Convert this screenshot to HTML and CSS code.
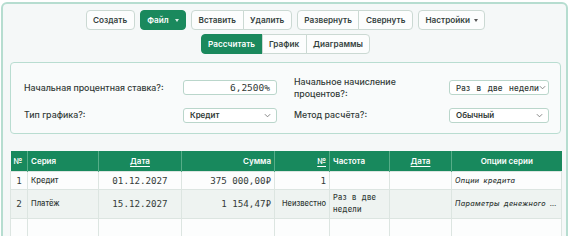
FILE: index.html
```html
<!DOCTYPE html>
<html lang="ru">
<head>
<meta charset="utf-8">
<title>График платежей</title>
<link rel="stylesheet" href="styles.css">
</head>
<body>
<div class="app">
  <div class="toolbar">
    <button class="btn">Создать</button>
    <button class="btn btn-green">Файл <span class="caret caret-light"></span></button>
    <div class="group">
      <button class="btn">Вставить</button>
      <button class="btn">Удалить</button>
    </div>
    <div class="group">
      <button class="btn">Развернуть</button>
      <button class="btn">Свернуть</button>
    </div>
    <button class="btn">Настройки <span class="caret"></span></button>
  </div>
  <div class="toolbar toolbar-second">
    <div class="group">
      <button class="btn btn-green">Рассчитать</button>
      <button class="btn">График</button>
      <button class="btn">Диаграммы</button>
    </div>
  </div>

  <div class="panel">
    <div class="label">Начальная процентная ставка?:</div>
    <div class="control input-num">6,2500%</div>
    <div class="label label-right">Начальное начисление<br>процентов?:</div>
    <div class="control select"><span class="spaced">Раз в две недели</span><svg class="chev" viewBox="0 0 8 5" width="7" height="5"><path d="M1 1l3 3 3-3" fill="none" stroke="#777" stroke-width="1"/></svg></div>

    <div class="label">Тип графика?:</div>
    <div class="control select"><span>Кредит</span><svg class="chev" viewBox="0 0 8 5" width="7" height="5"><path d="M1 1l3 3 3-3" fill="none" stroke="#777" stroke-width="1"/></svg></div>
    <div class="label label-right">Метод расчёта?:</div>
    <div class="control select"><span>Обычный</span><svg class="chev" viewBox="0 0 8 5" width="7" height="5"><path d="M1 1l3 3 3-3" fill="none" stroke="#777" stroke-width="1"/></svg></div>
  </div>

  <table class="grid">
    <colgroup>
      <col class="c1"><col class="c2"><col class="c3"><col class="c4">
      <col class="c5"><col class="c6"><col class="c7"><col class="c8">
    </colgroup>
    <thead>
      <tr>
        <th class="l">№</th>
        <th class="l">Серия</th>
        <th class="c"><u>Дата</u></th>
        <th class="r">Сумма</th>
        <th class="r"><u>№</u></th>
        <th class="l">Частота</th>
        <th class="c"><u>Дата</u></th>
        <th class="c">Опции серии</th>
      </tr>
    </thead>
    <tbody>
      <tr class="row1">
        <td class="c num">1</td>
        <td class="l">Кредит</td>
        <td class="c num">01.12.2027</td>
        <td class="r num">375 000,00₽</td>
        <td class="r num">1</td>
        <td></td>
        <td></td>
        <td class="l opt">Опции кредита</td>
      </tr>
      <tr class="row2">
        <td class="c num">2</td>
        <td class="l">Платёж</td>
        <td class="c num">15.12.2027</td>
        <td class="r num">1 154,47₽</td>
        <td class="r txt">Неизвестно</td>
        <td class="l txt wide">Раз в две недели</td>
        <td></td>
        <td class="l opt"><div class="ellip">Параметры денежного потока</div></td>
      </tr>
      <tr class="row3">
        <td></td><td></td><td></td><td></td><td></td><td></td><td></td><td></td>
      </tr>
    </tbody>
  </table>
</div>
</body>
</html>
```

FILE: styles.css
```css
* { box-sizing: border-box; }

body {
  margin: 0;
  background: #ffffff;
  font-family: Inter, "Noto Sans", "DejaVu Sans", sans-serif;
  color: #2f3a36;
  overflow: hidden;
}

.app {
  margin: 2px 2px 0 1px;
  min-height: 300px;
  border: 2px solid #b6ddd0;
  border-radius: 6px;
  background: #f5f8f8;
  padding: 6px 5px 0 7px;
}

.toolbar {
  display: flex;
  justify-content: center;
  align-items: center;
  gap: 5px;
}

.toolbar-second {
  margin-top: 4px;
}

.group {
  display: flex;
}

.btn {
  height: 20px;
  padding: 0 6.5px;
  font-family: Inter, "Noto Sans", sans-serif;
  font-size: 8.2px;
  font-weight: 600;
  color: #34423d;
  background: #fcfdfd;
  border: 1px solid #cbd9d3;
  border-radius: 4px;
  display: inline-flex;
  align-items: center;
  white-space: nowrap;
}

.group .btn {
  border-radius: 0;
}
.group .btn + .btn {
  margin-left: -1px;
}
.group .btn:first-child {
  border-radius: 4px 0 0 4px;
}
.group .btn:last-child {
  border-radius: 0 4px 4px 0;
}

.btn-green {
  background: #1a895d;
  border-color: #1a895d;
  color: #ffffff;
}

.caret {
  width: 0;
  height: 0;
  border-left: 2.5px solid transparent;
  border-right: 2.5px solid transparent;
  border-top: 3px solid #555;
  margin-left: 4px;
}
.caret-light {
  border-top-color: #dcefe7;
  margin-left: 6px;
}

.panel {
  margin-top: 8px;
  border: 1px solid #b9ddd1;
  border-radius: 4px;
  background: #f9fbfb;
  padding: 13px 12px 10px 13px;
  display: grid;
  grid-template-columns: 159px 94px 172px 100px;
  grid-template-rows: 23px 16px;
  row-gap: 8px;
  align-items: center;
}

.label {
  font-size: 8.8px;
  font-weight: 500;
  line-height: 11.5px;
  color: #323a37;
}
.label-right {
  padding-left: 17px;
}

.control {
  height: 15px;
  border: 1px solid #bad6cb;
  border-radius: 3px;
  background: #ffffff;
  display: flex;
  align-items: center;
  color: #2f3834;
  white-space: nowrap;
}

.input-num {
  justify-content: flex-end;
  padding: 0 6px;
  font-family: "DejaVu Sans Mono", "Liberation Mono", monospace;
  font-size: 9.5px;
}

.select {
  justify-content: space-between;
  padding: 0 5px 0 6px;
  font-weight: 600;
  font-size: 8px;
}
.select .spaced {
  word-spacing: 4px;
  font-weight: 500;
  letter-spacing: 0.2px;
}

.chev {
  flex: none;
}

.grid {
  margin-top: 17px;
  width: 551px;
  table-layout: fixed;
  border-collapse: collapse;
  font-size: 7.6px;
}

.c1 { width: 17px; }
.c2 { width: 71px; }
.c3 { width: 83px; }
.c4 { width: 93px; }
.c5 { width: 55px; }
.c6 { width: 60px; }
.c7 { width: 62px; }
.c8 { width: 110px; }

.grid th {
  height: 20px;
  background: #18895d;
  color: #ffffff;
  font-size: 8px;
  font-weight: 600;
  padding: 0 3px;
  border-left: 1px solid #56ad88;
  white-space: nowrap;
}
.grid th:first-child {
  border-left: none;
}
.grid th u {
  text-decoration-thickness: 1px;
  text-underline-offset: 2px;
}

.grid td {
  border: 1px solid #dce5e1;
  padding: 2px 3px;
  color: #333b38;
  font-weight: 500;
  vertical-align: middle;
}
.grid td:first-child {
  padding: 2px 2px;
}

.l { text-align: left; }
.c { text-align: center; }
.r { text-align: right; }

.num {
  font-family: "DejaVu Sans Mono", "Liberation Mono", monospace;
  font-size: 9.2px;
  font-weight: 400;
}

.txt {
  font-size: 7.5px;
}
.wide {
  word-spacing: 3px;
  line-height: 12px;
  letter-spacing: 0.3px;
}

.opt {
  font-style: italic;
  font-size: 7.2px;
  word-spacing: 2px;
  letter-spacing: 0.3px;
}

.ellip {
  white-space: nowrap;
  overflow: hidden;
  text-overflow: ellipsis;
}

.row1 td { height: 18px; background: #fcfdfd; }
.row2 td { height: 29px; background: #eef3f1; }
.row3 td { height: 30px; background: #fcfdfd; }
```
